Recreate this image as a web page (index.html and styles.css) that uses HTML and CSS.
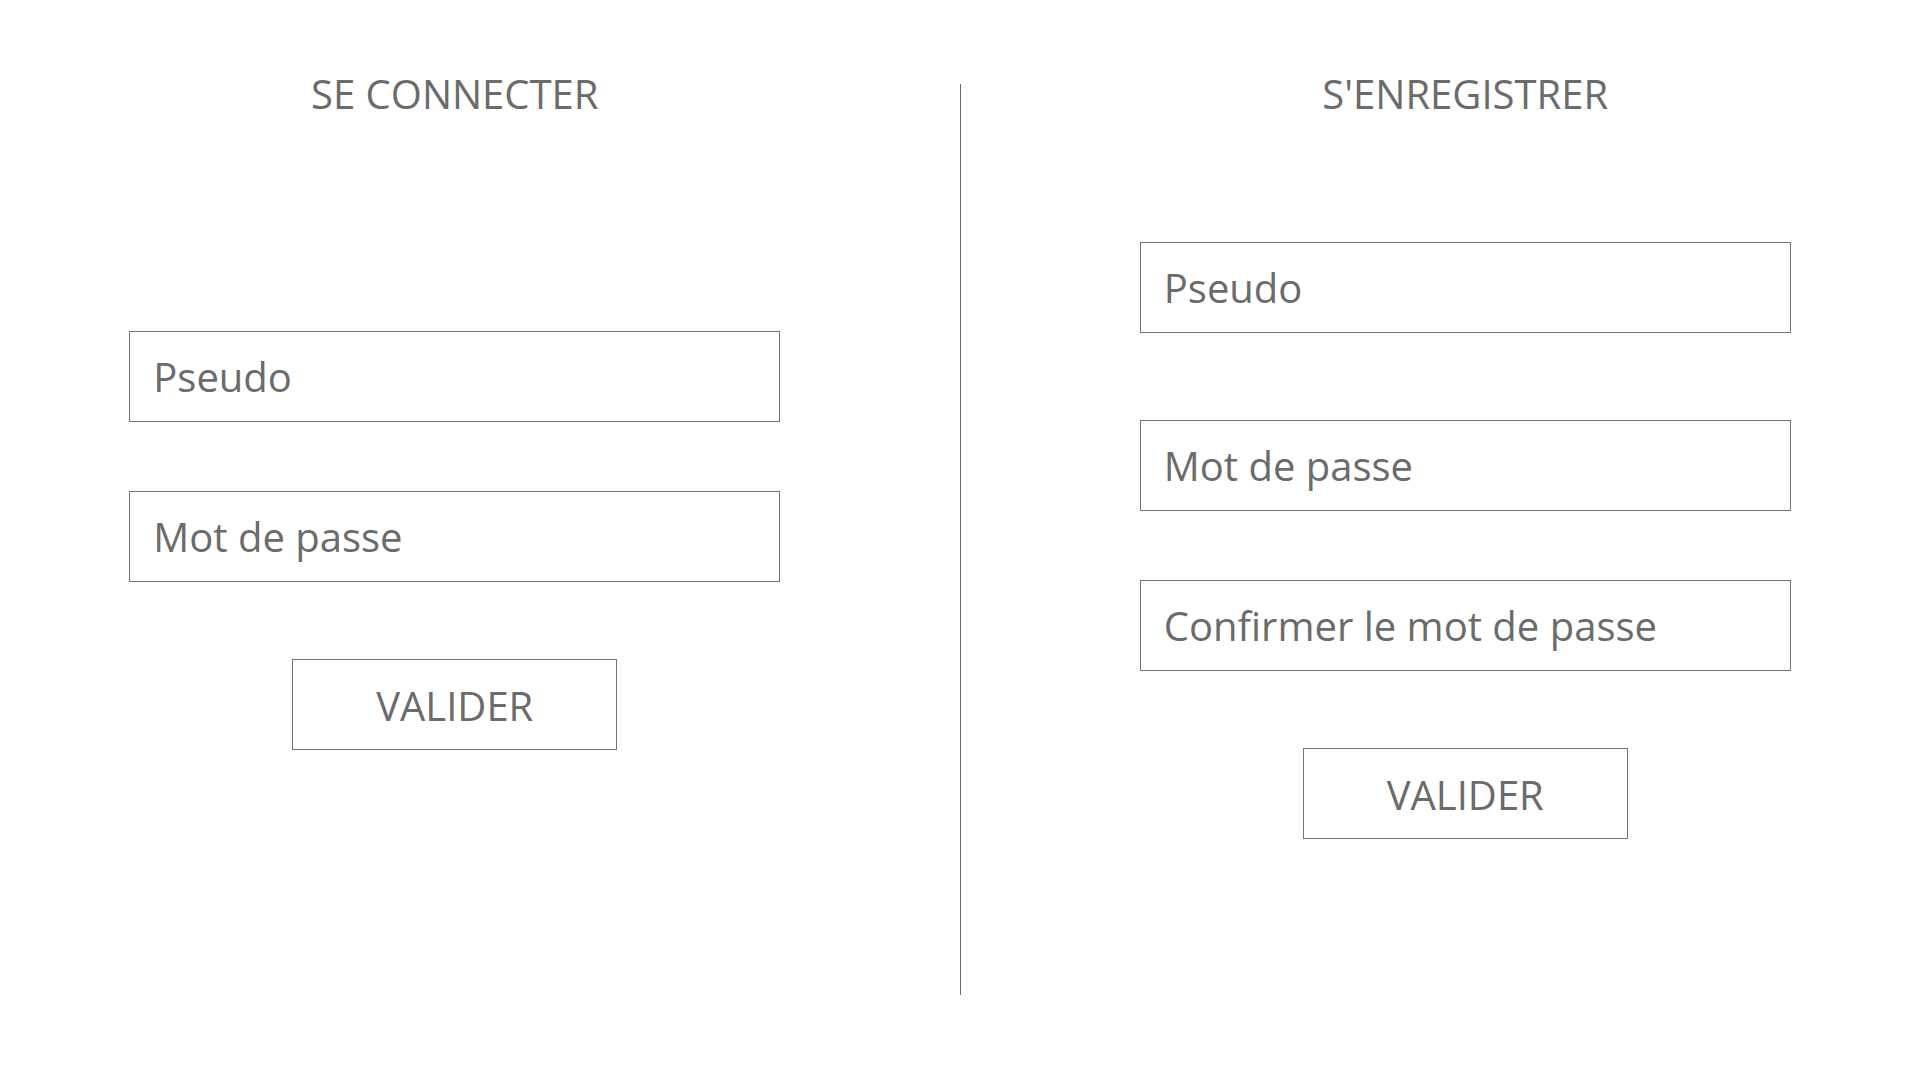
FILE: index.html
```html
<!DOCTYPE html>
<html lang="fr">
<head>
<meta charset="utf-8">
<title>Connexion</title>
<link rel="stylesheet" href="styles.css">
</head>
<body>
<main class="page">
  <section class="column">
    <h1 class="title">SE CONNECTER</h1>
    <form class="form">
      <input class="field" type="text" placeholder="Pseudo">
      <input class="field field-gap" type="password" placeholder="Mot de passe">
      <button class="submit" type="button">VALIDER</button>
    </form>
  </section>
  <div class="divider"></div>
  <section class="column">
    <h1 class="title">S'ENREGISTRER</h1>
    <form class="form">
      <input class="field" type="text" placeholder="Pseudo">
      <input class="field field-gap-lg" type="password" placeholder="Mot de passe">
      <input class="field field-gap" type="password" placeholder="Confirmer le mot de passe">
      <button class="submit" type="button">VALIDER</button>
    </form>
  </section>
</main>
</body>
</html>
```
FILE: styles.css
```css
* { box-sizing: border-box; }
html, body { margin: 0; padding: 0; background: #ffffff; }
body {
  font-family: "Open Sans", "Noto Sans", sans-serif;
  color: #6b6b6b;
}
.page {
  height: 1080px;
  display: grid;
  grid-template-columns: 1fr 1px 1fr;
  column-gap: 100px;
  padding: 0 50px;
}
.column {
  display: grid;
  grid-template-rows: 1fr auto 1fr;
  justify-items: center;
  height: 1080px;
}
.title {
  align-self: start;
  margin: 74px 0 0;
  font-size: 40px;
  line-height: 40px;
  font-weight: 400;
  color: #6b6b6b;
  letter-spacing: 0;
}
.form {
  grid-row: 2;
  display: flex;
  flex-direction: column;
  align-items: center;
}
.field {
  width: 651px;
  height: 91px;
  border: 1.5px solid #737373;
  border-radius: 0;
  padding: 1px 0 0 23px;
  font-family: inherit;
  font-size: 40px;
  color: #6b6b6b;
  background: #fff;
  outline: none;
}
.field::placeholder { color: #6b6b6b; opacity: 1; }
.field-gap { margin-top: 69px; }
.field-gap-lg { margin-top: 87px; }
.submit {
  margin-top: 77px;
  width: 325px;
  height: 91px;
  border: 1.5px solid #737373;
  border-radius: 0;
  background: #fff;
  font-family: inherit;
  font-size: 40px;
  color: #6b6b6b;
  padding: 3px 0 0;
  cursor: pointer;
}
.divider {
  background: #6b6b6b;
  width: 1px;
  margin: 84px 0 85px;
}
```
